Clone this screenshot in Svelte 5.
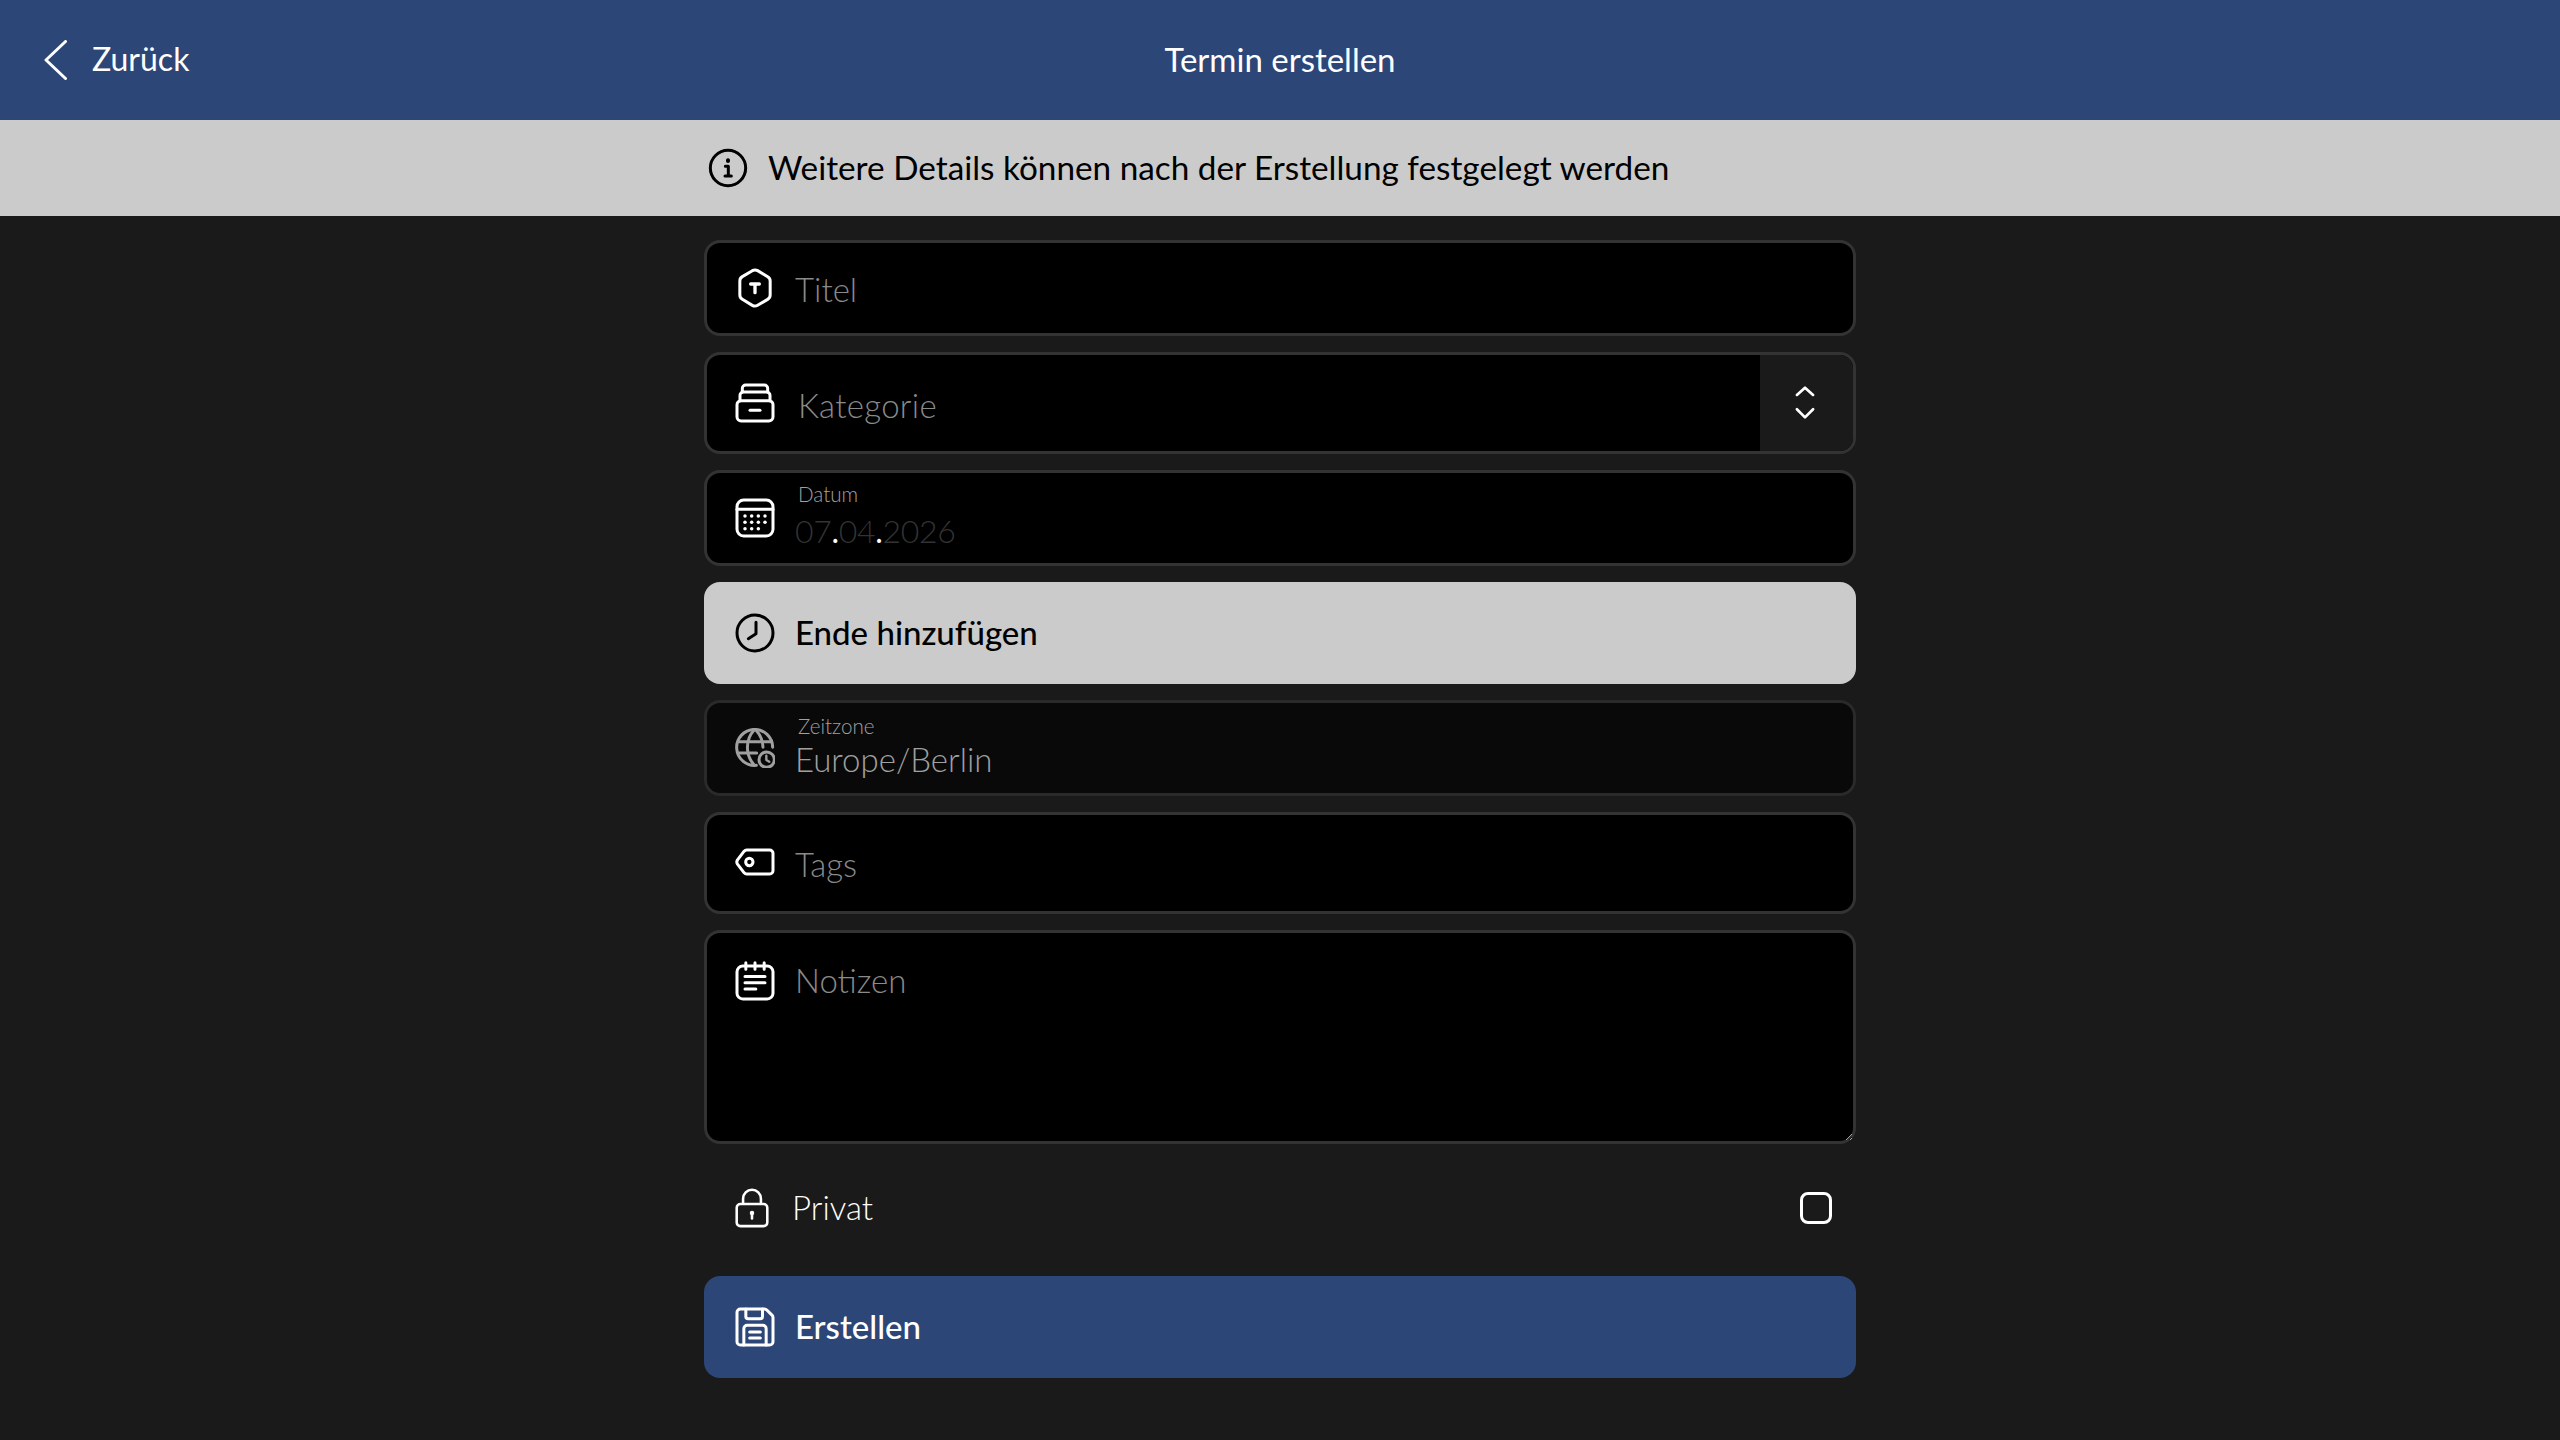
<script lang="ts">
  let title = $state("");
  let notes = $state("");
  let isPrivate = $state(false);
</script>

<div class="page">
  <header class="topbar">
    <button class="back" type="button">
      <svg class="back-icon" viewBox="0 0 24 40" aria-hidden="true">
        <path d="M22.5 1.5 L3 20 L22.5 38.5" />
      </svg>
      <span>Zurück</span>
    </button>
    <h1>Termin erstellen</h1>
  </header>

  <div class="notice">
    <div class="notice-inner">
      <svg class="icon" viewBox="0 0 24 24" aria-hidden="true">
        <circle cx="12" cy="12" r="10.6" />
        <path d="M10.4 11h1.8v5.6M10.2 16.8h3.8" />
        <path d="M12 7.4v.4" stroke-width="2.4" />
      </svg>
      <span>Weitere Details können nach der Erstellung festgelegt werden</span>
    </div>
  </div>

  <form class="form">
    <label class="field short">
      <svg class="icon" viewBox="0 0 24 24" aria-hidden="true">
        <path d="M10.4 1.6a3.2 3.2 0 0 1 3.2 0l6 3.6a3 3 0 0 1 1.5 2.6v8.4a3 3 0 0 1-1.5 2.6l-6 3.6a3.2 3.2 0 0 1-3.2 0l-6-3.6a3 3 0 0 1-1.5-2.6V7.8a3 3 0 0 1 1.5-2.6z" />
        <path d="M9.4 9.6h5.2M12 9.6v5.2" stroke-width="2" />
      </svg>
      <input class="title-input" type="text" placeholder="Titel" bind:value={title} />
    </label>

    <div class="field tall select">
      <svg class="icon" viewBox="0 0 24 24" aria-hidden="true">
        <rect x="1.2" y="10.6" width="21.6" height="12.2" rx="2.5" />
        <path d="M3 10.6V7.4A2 2 0 0 1 5 5.4h14a2 2 0 0 1 2 2v3.2" />
        <path d="M4.4 5.4V3.2a2 2 0 0 1 2-2h11.2a2 2 0 0 1 2 2v2.2" />
        <path d="M9 16.4h6" />
      </svg>
      <span class="placeholder select-label">Kategorie</span>
      <span class="select-arrows">
        <svg viewBox="0 0 24 40" aria-hidden="true">
          <path d="M3 11 L12 3 L21 11" />
          <path d="M3 27 L12 36 L21 27" />
        </svg>
      </span>
    </div>

    <div class="field short">
      <svg class="icon" viewBox="0 0 24 24" aria-hidden="true">
        <rect x="1.2" y="1.2" width="21.6" height="21.6" rx="4" />
        <path d="M1.2 6.8h21.6" />
        <g class="dots">
          <circle cx="6" cy="10.8" r="1.05" /><circle cx="10" cy="10.8" r="1.05" /><circle cx="14" cy="10.8" r="1.05" /><circle cx="18" cy="10.8" r="1.05" />
          <circle cx="6" cy="14.6" r="1.05" /><circle cx="10" cy="14.6" r="1.05" /><circle cx="14" cy="14.6" r="1.05" /><circle cx="18" cy="14.6" r="1.05" />
          <circle cx="6" cy="18.4" r="1.05" /><circle cx="10" cy="18.4" r="1.05" /><circle cx="14" cy="18.4" r="1.05" />
        </g>
      </svg>
      <div class="stack">
        <span class="mini-label">Datum</span>
        <span class="date">07<b>.</b>04<b>.</b>2026</span>
      </div>
    </div>

    <button class="action light" type="button">
      <svg class="icon" viewBox="0 0 24 24" aria-hidden="true">
        <circle cx="12" cy="12" r="10.8" />
        <path d="M12.6 5.5v7L8 15.4" />
      </svg>
      <span>Ende hinzufügen</span>
    </button>

    <div class="field short disabled">
      <svg class="icon" viewBox="0 0 24 24" aria-hidden="true">
        <path d="M12.8 22.4A10.8 10.8 0 1 1 22.6 11.5" />
        <path d="M2 8.2h20M2 15h11" />
        <path d="M11.5 1.2c-5.4 5.8-5.4 15 0 21M12.5 1.2c2.8 3 4.2 6.6 4.3 10.4" />
        <circle cx="19" cy="19" r="4.6" fill="#090909" />
        <path d="M18.8 16.6v2.6l1.8 1" stroke-width="1.4" />
      </svg>
      <div class="stack">
        <span class="mini-label">Zeitzone</span>
        <span class="value">Europe/Berlin</span>
      </div>
    </div>

    <label class="field tall">
      <svg class="icon tag" viewBox="0 0 24 24" aria-hidden="true">
        <path d="M7 4.8h13.8a2 2 0 0 1 2 2v10.4a2 2 0 0 1-2 2H7a2 2 0 0 1-1.5-.7l-4-5.2a2.4 2.4 0 0 1 0-2.6l4-5.2A2 2 0 0 1 7 4.8z" />
        <circle cx="8.6" cy="12" r="2.2" />
      </svg>
      <input class="tag-input" type="text" placeholder="Tags" />
    </label>

    <label class="field notes">
      <svg class="icon" viewBox="0 0 24 24" aria-hidden="true">
        <rect x="1.2" y="3" width="21.6" height="19.8" rx="3.5" />
        <path d="M6.5 1v4M12 1v4M17.5 1v4" />
        <path d="M6 9.3h12M6 13h12M6 16.8h6.5" />
      </svg>
      <textarea placeholder="Notizen" bind:value={notes}></textarea>
    </label>

    <label class="check-row">
      <svg class="icon lock" viewBox="0 0 24 28" aria-hidden="true">
        <rect x="1.2" y="11.2" width="21.6" height="15.6" rx="2.6" />
        <path d="M5.7 11V7.4a6.3 6.3 0 0 1 12.6 0V11" />
        <circle cx="12" cy="17.6" r="1.6" class="solid" />
        <path d="M12 18v3.4" />
      </svg>
      <span class="check-label">Privat</span>
      <input type="checkbox" bind:checked={isPrivate} />
    </label>

    <button class="action primary" type="submit">
      <svg class="icon" viewBox="0 0 24 24" aria-hidden="true">
        <path d="M3.2 1.2h14.5a2 2 0 0 1 1.4.6l3.1 3.1a2 2 0 0 1 .6 1.4v14.5a2 2 0 0 1-2 2H3.2a2 2 0 0 1-2-2V3.2a2 2 0 0 1 2-2z" />
        <path d="M6.5 1.2v4.5a1.4 1.4 0 0 0 1.4 1.4h7.2a1.4 1.4 0 0 0 1.4-1.4V1.2" />
        <path d="M5.3 22.8V13a2 2 0 0 1 2-2h9.4a2 2 0 0 1 2 2v9.8" />
        <path d="M8.8 15h6.4M8.8 18.6h6.4" />
      </svg>
      <span>Erstellen</span>
    </button>
  </form>
</div>

<style>
  :global(body) {
    margin: 0;
    background: #1a1a1a;
  }

  .page {
    --blue: #2c4677;
    --light: #cbcbcb;
    --border: #333333;
    min-height: 1440px;
    background: #1a1a1a;
    font-family: Lato, "Open Sans", sans-serif;
    font-size: 33px;
    color: #fff;
  }

  .topbar {
    position: relative;
    height: 120px;
    display: flex;
    align-items: center;
    justify-content: center;
    background: var(--blue);
  }

  .topbar h1 {
    margin: 0 0 3px;
    font-size: 33px;
    font-weight: 400;
  }

  .back {
    position: absolute;
    left: 43px;
    top: 39px;
    display: flex;
    align-items: center;
    gap: 25px;
    padding: 0;
    border: 0;
    background: none;
    color: inherit;
    font: inherit;
    font-size: 32px;
  }

  .back span {
    margin-bottom: 2px;
  }

  .back-icon {
    width: 24px;
    height: 40px;
  }

  .back-icon path {
    fill: none;
    stroke: #fff;
    stroke-width: 3;
    stroke-linecap: round;
    stroke-linejoin: round;
  }

  .notice {
    height: 96px;
    display: flex;
    align-items: center;
    justify-content: center;
    background: var(--light);
    color: #000;
  }

  .notice-inner {
    width: 1144px;
    display: flex;
    align-items: center;
    gap: 20px;
    font-size: 33.3px;
  }

  .notice-inner span {
    margin-bottom: 3px;
  }

  .icon {
    flex: none;
    width: 40px;
    height: 40px;
    fill: none;
    stroke: currentColor;
    stroke-width: 1.8;
    stroke-linecap: round;
    stroke-linejoin: round;
  }

  .dots circle,
  .solid {
    fill: currentColor;
    stroke: none;
  }

  .form {
    width: 1152px;
    margin: 0 auto;
    padding-top: 24px;
    display: flex;
    flex-direction: column;
    gap: 16px;
  }

  .field {
    box-sizing: border-box;
    display: flex;
    align-items: center;
    gap: 20px;
    padding-left: 28px;
    border: 3px solid var(--border);
    border-radius: 16px;
    background: #000;
    color: #fff;
    overflow: hidden;
  }

  .short {
    height: 96px;
  }

  .tall {
    height: 102px;
  }

  .field input,
  .field textarea {
    flex: 1;
    min-width: 0;
    padding: 0;
    border: 0;
    outline: 0;
    background: transparent;
    color: #fff;
    font: inherit;
    font-weight: 300;
  }

  .field input::placeholder,
  .field textarea::placeholder,
  .placeholder {
    color: #8a8a8a;
    opacity: 1;
    font-weight: 300;
  }

  .title-input {
    padding-top: 2px !important;
  }

  .select {
    padding-right: 0;
  }

  .select-label {
    flex: 1;
    padding-left: 3px;
    padding-top: 3px;
    letter-spacing: 0.3px;
  }

  .select-arrows {
    box-sizing: border-box;
    align-self: stretch;
    width: 93px;
    padding-right: 3px;
    display: flex;
    align-items: center;
    justify-content: center;
    background: #1a1a1a;
  }

  .select-arrows svg {
    width: 22px;
    height: 36px;
    fill: none;
    stroke: #fff;
    stroke-width: 3;
    stroke-linecap: round;
    stroke-linejoin: round;
  }

  .stack {
    display: flex;
    flex-direction: column;
    padding-bottom: 3px;
  }

  .mini-label {
    padding-left: 3px;
    font-size: 20.6px;
    font-weight: 300;
    line-height: 24px;
    color: #a0a0a0;
  }

  .date {
    margin-top: 5px;
    font-size: 32px;
    font-weight: 300;
    letter-spacing: -0.3px;
    line-height: 40px;
    color: #333333;
  }

  .date b {
    font-weight: 400;
    color: #fff;
  }

  .value {
    margin: 1px 0;
    font-size: 33px;
    font-weight: 300;
    line-height: 40px;
    color: #a0a0a0;
  }

  .disabled {
    background: #090909;
    border-color: #2a2a2a;
    color: #a0a0a0;
  }

  .tag-input {
    padding-top: 2px !important;
  }

  .tag {
    margin-top: -2px;
  }

  .notes {
    height: 214px;
    align-items: flex-start;
    padding-top: 26px;
    overflow: visible;
  }

  .notes .icon {
    margin-top: 2px;
  }

  .notes textarea {
    align-self: stretch;
    padding-top: 2px;
    line-height: 38px;
    resize: both;
    border-radius: 12px;
  }

  .check-row {
    box-sizing: border-box;
    height: 100px;
    display: flex;
    align-items: center;
    padding: 0 24px 4px 31px;
    color: #fff;
  }

  .lock {
    width: 34px;
    height: 40px;
  }

  .check-label {
    flex: 1;
    margin-left: 23px;
    margin-bottom: 2px;
    font-weight: 300;
  }

  .check-row input {
    appearance: none;
    box-sizing: border-box;
    width: 32px;
    height: 32px;
    margin: 0;
    border: 3px solid #fff;
    border-radius: 8px;
    background: transparent;
  }

  .action {
    box-sizing: border-box;
    height: 102px;
    display: flex;
    align-items: center;
    gap: 20px;
    padding: 0 0 0 31px;
    border: 0;
    border-radius: 16px;
    font: inherit;
    font-weight: 500;
    text-align: left;
  }

  .action span {
    margin-bottom: 3px;
  }

  .light {
    background: var(--light);
    color: #000;
  }

  .primary {
    background: var(--blue);
    color: #fff;
  }
</style>
